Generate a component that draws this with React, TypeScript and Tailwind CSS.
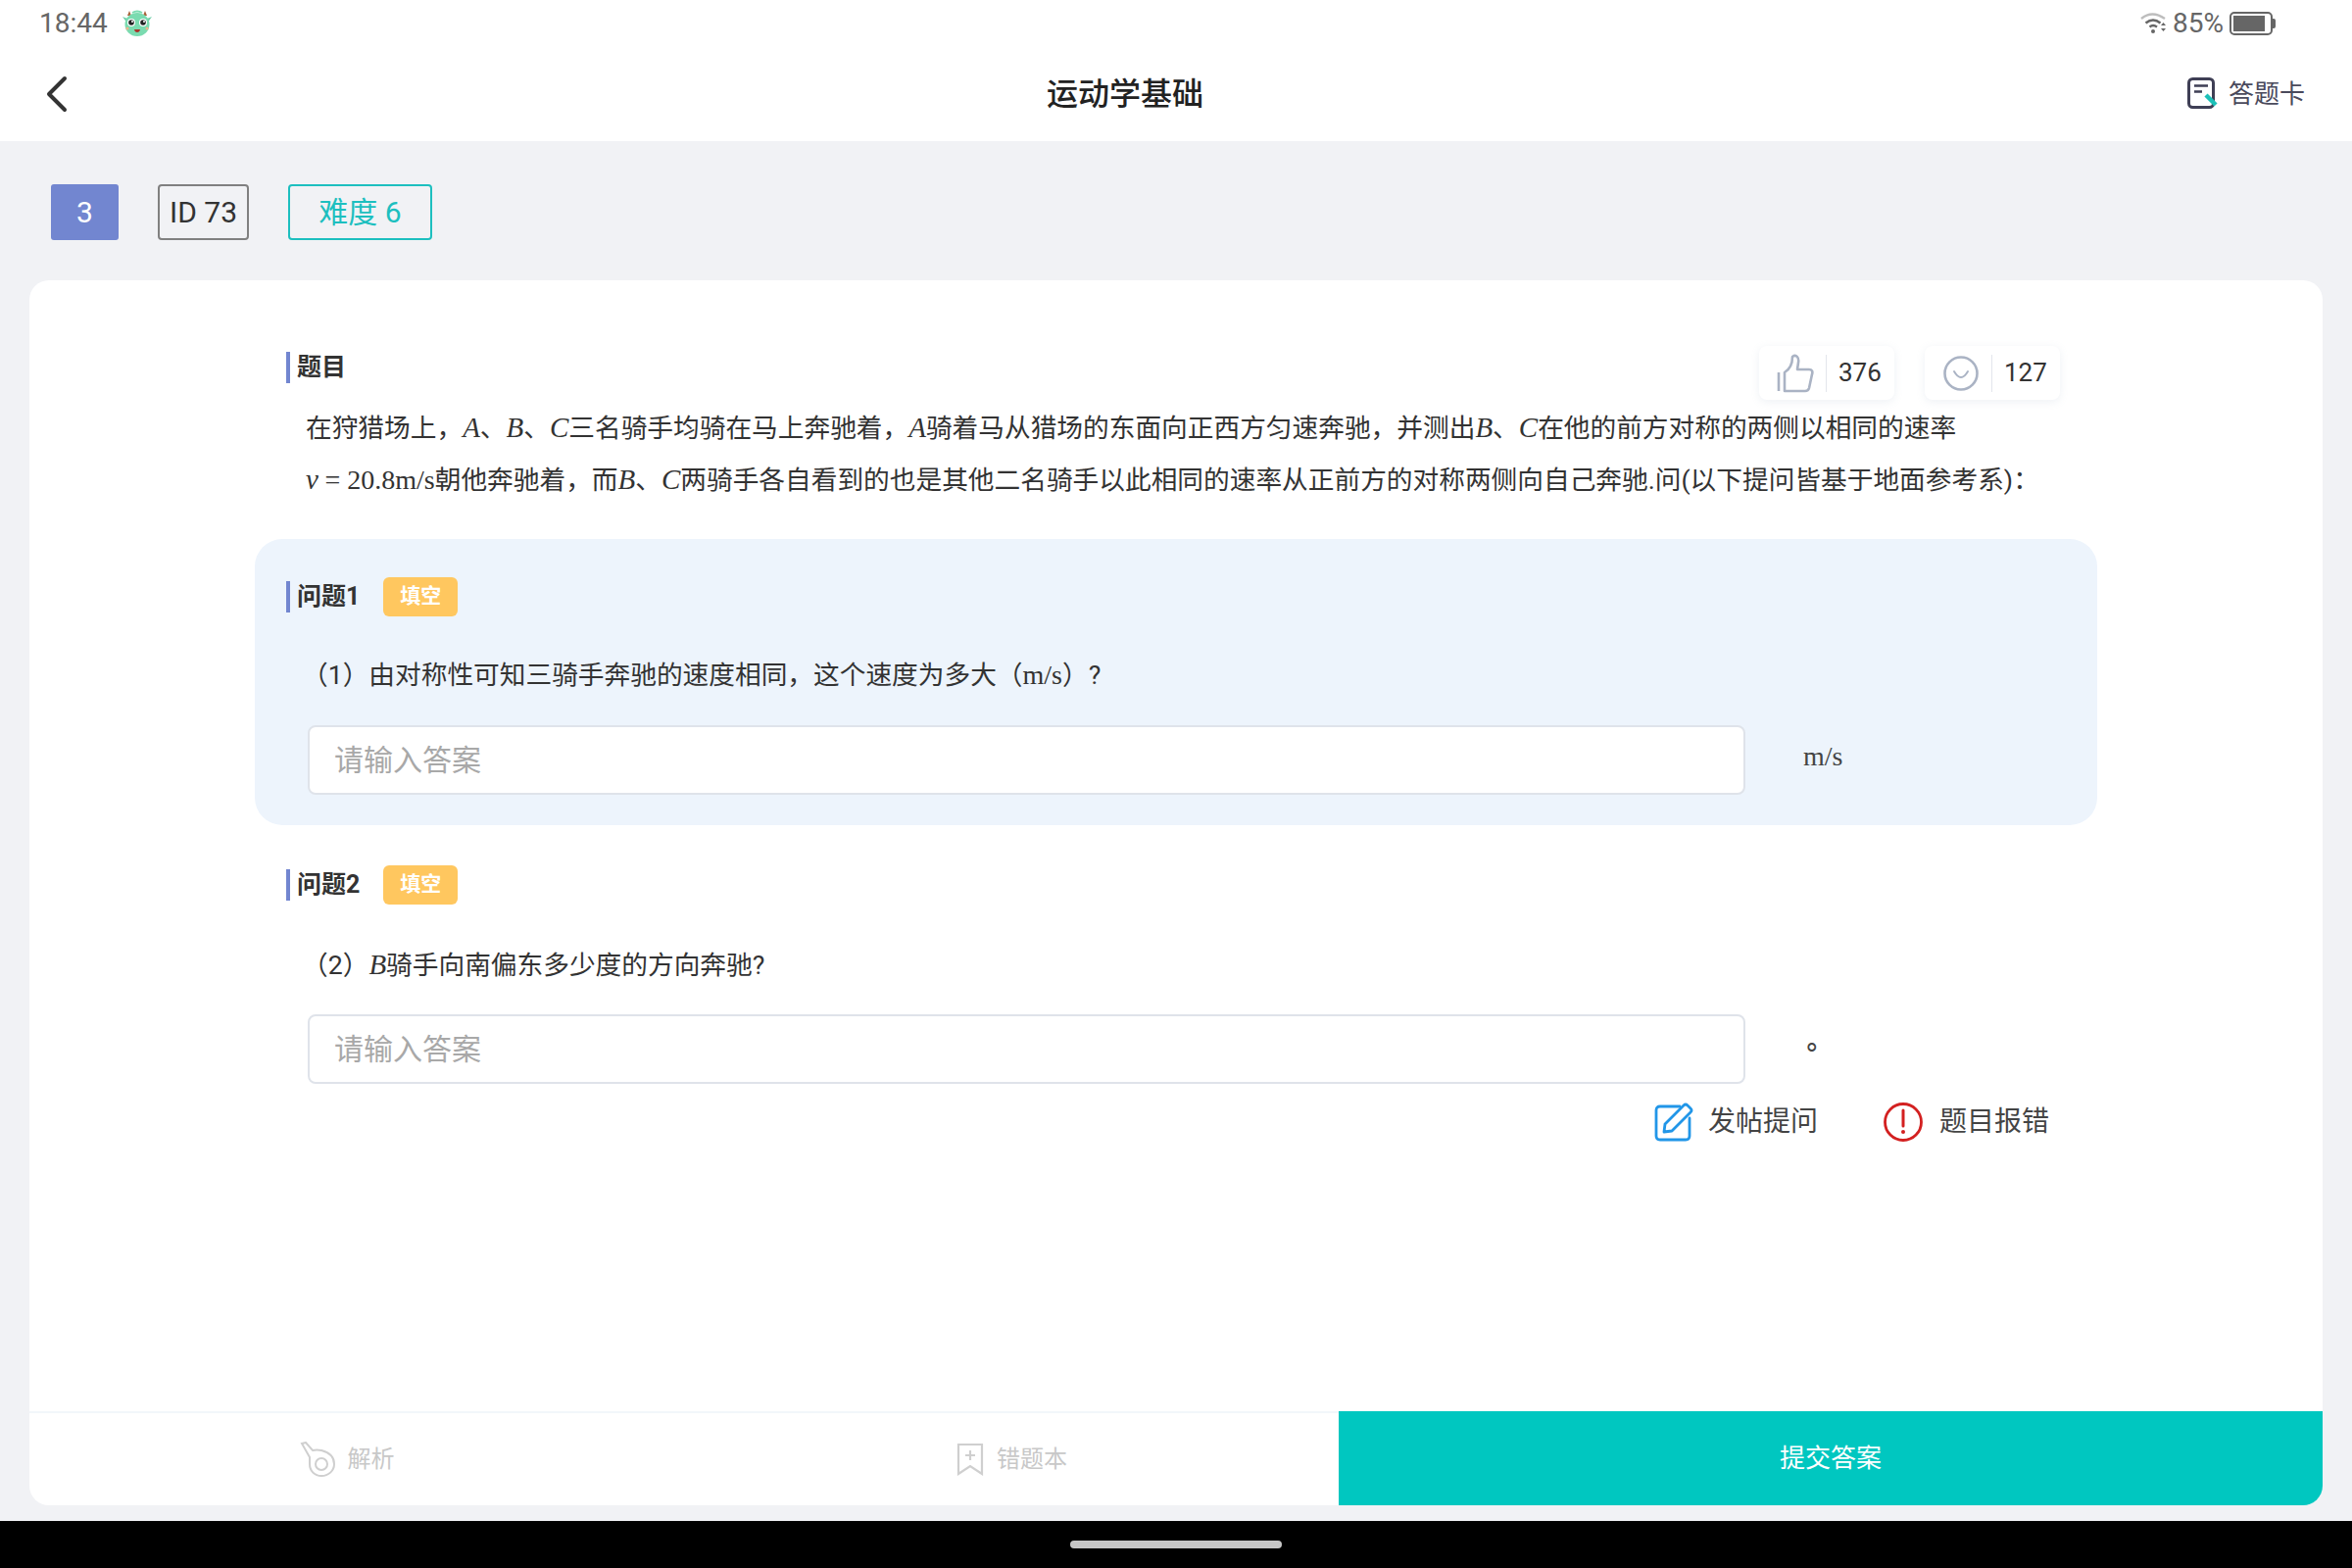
import React from "react";

const sans = "font-['Roboto','Noto_Sans_CJK_SC',sans-serif]";

function M({ children }: { children: React.ReactNode }) {
  return <span className="font-['Liberation_Serif',serif] italic text-[29px]">{children}</span>;
}
function R({ children }: { children: React.ReactNode }) {
  return <span className="font-['Liberation_Serif',serif] text-[28px]">{children}</span>;
}

function Mascot() {
  return (
    <svg width="32" height="28" viewBox="0 0 32 28" className="ml-[14px]">
      <path d="M6 6 L8 1 L10 6Z M22 6 L24 1 L26 6Z" fill="#a8623a" />
      <path d="M1 7 L6 9 L6 14 Z M31 7 L26 9 L26 14 Z" fill="#6fcfa8" />
      <ellipse cx="16" cy="15" rx="12.5" ry="12" fill="#7adbb0" />
      <path d="M11 3 q5 -3 10 0" stroke="#7adbb0" strokeWidth="2" fill="none" />
      <circle cx="10" cy="13" r="4" fill="#fff" />
      <circle cx="22" cy="13" r="4" fill="#fff" />
      <circle cx="10" cy="13" r="2.8" fill="#222" />
      <circle cx="22" cy="13" r="2.8" fill="#222" />
      <circle cx="11" cy="12" r="1" fill="#fff" />
      <circle cx="23" cy="12" r="1" fill="#fff" />
      <path d="M13 20 h6 q-0.5 3 -3 3 q-2.500 0 -3 -3Z" fill="#a8342c" />
      <circle cx="6" cy="19" r="1.500" fill="#f0b48c" />
      <circle cx="26" cy="19" r="1.500" fill="#f0b48c" />
    </svg>
  );
}

function Wifi() {
  return (
    <svg width="28" height="24" viewBox="0 0 28 24">
      <path d="M1 7 Q12 -2 25 7" stroke="#bdbdbd" strokeWidth="2.400" fill="none" />
      <path d="M5.500 11.500 Q13 5.500 20.500 11.500" stroke="#666" strokeWidth="2.400" fill="none" />
      <path d="M9.500 15.500 Q13 12.500 17 15.500" stroke="#666" strokeWidth="2.400" fill="none" />
      <circle cx="13" cy="20" r="2" fill="#666" />
      <path d="M21 14 L23.500 11 L26 14Z M21 17 L26 17 L23.500 20Z" fill="#666" />
    </svg>
  );
}

function Battery() {
  return (
    <div className="ml-[6px] flex items-center">
      <div className="flex h-[24px] w-[44px] items-center rounded-[5px] border-[2px] border-[#666] p-[2px]">
        <div className="h-full w-[32px] bg-[#666]" />
      </div>
      <div className="h-[10px] w-[3px] rounded-r-[2px] bg-[#666]" />
    </div>
  );
}

function CardIcon() {
  return (
    <svg width="32" height="34" viewBox="0 0 32 34" className="mr-[10px]">
      <rect x="1.500" y="1.500" width="25" height="29" rx="4" fill="none" stroke="#3f3f55" strokeWidth="3" />
      <path d="M7 8.500 H21 M7 14.500 H15" stroke="#3f3f55" strokeWidth="2.500" />
      <path d="M19 18 L29 28" stroke="#1cc0b8" strokeWidth="4.500" />
    </svg>
  );
}

function Thumb() {
  return (
    <svg width="38" height="40" viewBox="0 0 38 40" fill="none" stroke="#aab3c4" strokeWidth="2.600">
      <path d="M2 19 V38" />
      <path d="M8 19 C13 16 16 10 16 3 C20 0 23 4 22 9 L21 16 H33 C36 16 37 18 36 21 L33 35 C32.500 37 31 38 29 38 H8 Z" strokeLinejoin="round" />
    </svg>
  );
}

function Smile() {
  return (
    <svg width="36" height="36" viewBox="0 0 36 36" fill="none" stroke="#aab3c4" strokeWidth="2.600">
      <circle cx="18" cy="18" r="16.500" />
      <path d="M11 16 Q18 28 25 16" strokeLinecap="round" strokeWidth="2" />
    </svg>
  );
}

function Stat({ icon, n }: { icon: React.ReactNode; n: string }) {
  return (
    <div className="flex h-[55px] w-[138px] items-center rounded-[8px] bg-white pl-[17px] shadow-[0_2px_8px_rgba(150,165,190,0.16)]">
      <div className="flex w-[39px] justify-center">{icon}</div>
      <div className="ml-[12px] h-[38px] w-[1px] bg-[#e3e6ec]" />
      <div className="ml-[12px] text-[26px] text-[#333]">{n}</div>
    </div>
  );
}

function Heading({ label, badge }: { label: string; badge?: boolean }) {
  return (
    <div className="flex items-center">
      <div className="h-[32px] w-[4px] bg-[#7286d0]" />
      <div className="ml-[7px] text-[25px] font-bold leading-[32px] text-[#333]">{label}</div>
      {badge && (
        <div className="ml-[24px] flex h-[40px] w-[76px] items-center justify-center rounded-[6px] bg-[#ffc75f] text-[21px] font-bold text-white">
          填空
        </div>
      )}
    </div>
  );
}

function Question({
  title,
  text,
  unit,
  active,
  topPad,
  gap,
  children,
}: {
  title: string;
  text: React.ReactNode;
  unit: React.ReactNode;
  active?: boolean;
  topPad: string;
  gap: string;
  children?: React.ReactNode;
}) {
  return (
    <div className={`${active ? "rounded-[28px] bg-[#edf4fc] pb-[31px]" : ""} ${topPad} pl-[32px]`}>
      <Heading label={title} badge />
      <div className={`${gap} h-[52px] pl-[16px] text-[26.7px] leading-[52px] whitespace-nowrap text-[#333]`}>{text}</div>
      <div className="mt-[25px] flex items-start pl-[22px]">
        <input
          readOnly
          placeholder="请输入答案"
          className="h-[71px] w-[1467px] rounded-[8px] border-[2.500px] border-[#dfe3ea] bg-white pl-[25px] text-[30px] text-[#333] outline-none placeholder:text-[#a8a8a8]"
        />
        <div className="ml-[59px] text-[28px] leading-[64px] text-[#444]">{unit}</div>
      </div>
      {children}
    </div>
  );
}

export default function App() {
  return (
    <div className={`flex h-[1600px] w-[2400px] flex-col bg-[#f1f2f5] ${sans}`}>
      {/* status bar */}
      <div className="flex h-[48px] items-center justify-between bg-white pl-[40px] pr-[78px]">
        <div className="flex items-center">
          <span className="text-[28px] text-[#666]">18:44</span>
          <Mascot />
        </div>
        <div className="flex items-center">
          <Wifi />
          <span className="ml-[5px] text-[28px] text-[#666]">85%</span>
          <Battery />
        </div>
      </div>

      {/* header */}
      <div className="flex h-[96px] items-center justify-between bg-white pl-[44px] pr-[48px]">
        <div className="flex w-[28px] justify-center">
          <svg width="24" height="38" viewBox="0 0 24 38" fill="none" stroke="#333" strokeWidth="4" strokeLinecap="round" strokeLinejoin="round">
            <path d="M20 3 L4 19 L20 35" />
          </svg>
        </div>
        <div className="text-[32px] font-medium text-[#222]">运动学基础</div>
        <div className="flex items-center pl-[8px]">
          <CardIcon />
          <span className="text-[26px] text-[#4a4a5c]">答题卡</span>
        </div>
      </div>

      {/* tags */}
      <div className="flex pl-[52px] pt-[44px]">
        <div className="flex h-[57px] w-[69px] items-center justify-center rounded-[3px] bg-[#7286d0] text-[30px] text-white">3</div>
        <div className="ml-[40px] flex h-[57px] w-[93px] items-center justify-center rounded-[4px] border-[2px] border-[#808080] text-[30px] text-[#333]">
          ID 73
        </div>
        <div className="ml-[40px] flex h-[57px] w-[147px] items-center justify-center rounded-[4px] border-[2px] border-[#1dbfbf] text-[30px] text-[#1dbfbf]">
          难度 6
        </div>
      </div>

      {/* card */}
      <div className="mx-[30px] mt-[41px] flex h-[1250px] flex-col overflow-hidden rounded-[20px] bg-white">
        <div className="flex-1 pl-[230px] pr-[230px] pt-[67px]">
          <div className="flex items-start justify-between pl-[32px] pr-[38px]">
            <div className="mt-[6px]">
              <Heading label="题目" />
            </div>
            <div className="flex gap-[31px]">
              <Stat icon={<Thumb />} n="376" />
              <Stat icon={<Smile />} n="127" />
            </div>
          </div>
          <div className="mt-[2px] pl-[52px] text-[26.7px] leading-[52px] whitespace-nowrap text-[#333]">
            <div>
              在狩猎场上，<M>A</M>、<M>B</M>、<M>C</M>三名骑手均骑在马上奔驰着，<M>A</M>骑着马从猎场的东面向正西方匀速奔驰，并测出<M>B</M>、<M>C</M>在他的前方对称的两侧以相同的速率
            </div>
            <div>
              <M>v</M> <R>= 20.8m/s</R>朝他奔驰着，而<M>B</M>、<M>C</M>两骑手各自看到的也是其他二名骑手以此相同的速率从正前方的对称两侧向自己奔驰.问(以下提问皆基于地面参考系)：
            </div>
          </div>

          <div className="mt-[34px]">
            <Question
              active
              topPad="pt-[39px]"
              gap="mt-[34px]"
              title="问题1"
              text={
                <>
                  （1）由对称性可知三骑手奔驰的速度相同，这个速度为多大（<R>m/s</R>）?
                </>
              }
              unit={<R>m/s</R>}
            />
            <Question
              topPad="pt-[41px]"
              gap="mt-[35px]"
              title="问题2"
              text={
                <>
                  （2）<M>B</M>骑手向南偏东多少度的方向奔驰?
                </>
              }
              unit={<span className="font-['Liberation_Serif',serif]">∘</span>}
            >
              <div className="mt-[19px] flex h-[40px] items-center justify-end pr-[49px] text-[28px] text-[#444]">
                <svg width="40" height="40" viewBox="0 0 40 40" fill="none" stroke="#2196e8" strokeWidth="2.800" strokeLinecap="round" strokeLinejoin="round">
                  <path d="M26 4 H6 Q2 4 2 8 V34 Q2 38 6 38 H32 Q36 38 36 34 V16" />
                  <path d="M10 30 L11 22 L30 3 Q32 1 34 3 L37 6 Q39 8 37 10 L18 29 Z" />
                </svg>
                <span className="ml-[15px]">发帖提问</span>
                <svg width="40" height="40" viewBox="0 0 40 40" fill="none" className="ml-[67px]">
                  <circle cx="20" cy="20" r="18.500" stroke="#d32020" strokeWidth="2.800" />
                  <path d="M20 8 V24" stroke="#d32020" strokeWidth="3" strokeLinecap="round" />
                  <circle cx="20" cy="30" r="2" fill="#d32020" />
                </svg>
                <span className="ml-[17px]">题目报错</span>
              </div>
            </Question>
          </div>
        </div>

        {/* footer */}
        <div className="flex h-[96px]">
          <div className="flex w-[1336px] border-t-[2px] border-[#f2f7fa] text-[24px] text-[#c8c8c8]">
            <div className="flex w-[668px] items-center justify-center pr-[0px]">
              <div className="flex items-center pr-[20px]">
                <svg width="36" height="36" viewBox="0 0 36 36" fill="none" stroke="#cfcfcf" strokeWidth="2">
                  <path d="M2 2 L6 1 L13 9 Q17 8 22 9 C30 11 35 16 35 23 C35 30 29 35 22 35 C15 35 10 30 10 23 L10 16 Z" />
                  <circle cx="22" cy="23" r="6" />
                </svg>
                <span className="ml-[13px]">解析</span>
              </div>
            </div>
            <div className="flex w-[668px] items-center">
              <svg width="28" height="34" viewBox="0 0 28 34" fill="none" stroke="#cfcfcf" strokeWidth="2.200" className="ml-[278px]">
                <path d="M2 2 H26 V32 L14 24 L2 32 Z" />
                <path d="M14 8 V18 M9 13 H19" />
              </svg>
              <span className="ml-[13px]">错题本</span>
            </div>
          </div>
          <div className="flex flex-1 items-center justify-center bg-[#00c7c0] text-[26px] text-white">提交答案</div>
        </div>
      </div>

      {/* nav */}
      <div className="mt-[16px] flex h-[48px] items-center justify-center bg-black">
        <div className="h-[8px] w-[216px] rounded-full bg-[#c7c7c7]" />
      </div>
    </div>
  );
}
